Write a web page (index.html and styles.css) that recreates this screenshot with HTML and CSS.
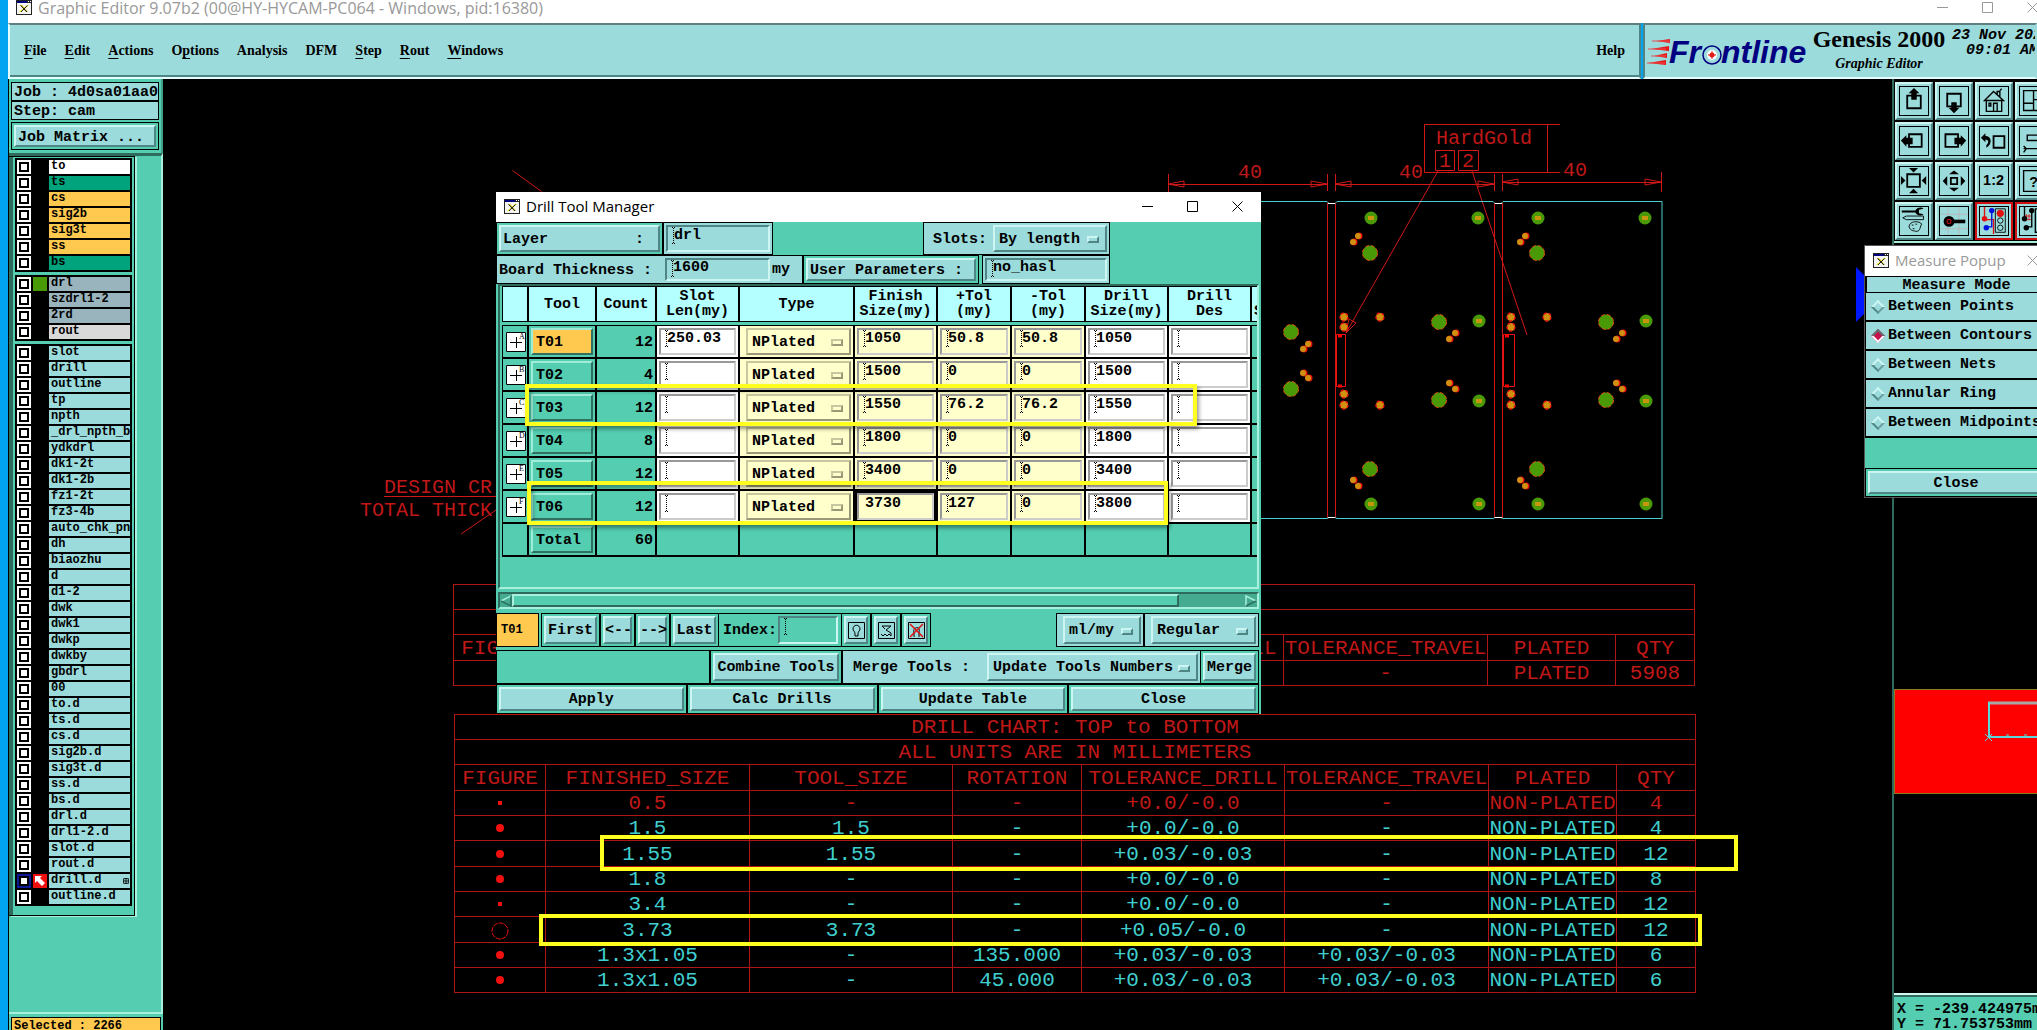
FILE: index.html
```html
<!DOCTYPE html>
<html lang="en">
<head>
<meta charset="utf-8">
<title>Graphic Editor</title>
<link rel="stylesheet" href="styles.css">
</head>
<body>
<svg class="defs" width="0" height="0" aria-hidden="true">
  <symbol id="xwin" viewBox="0 0 16 15"><path d="M0 0h16v15H0z" fill="#222"/><path d="M1 3h14v11H1z" fill="#f4f4f4"/><path d="M1 1h10v2H1z" fill="#000080"/><path d="M12 1h1v1h-1zM14 1h1v1h-1z" fill="#fff"/><path d="M3 12l8-7h2l-8 7z" fill="#e8e020"/><path d="M4 5h2l6 7h-2z" fill="#c8b400"/><path d="M4.500 5.500l6.500 6.500M11.500 5.500L5 12" stroke="#222"/></symbol>
  <symbol id="min" viewBox="0 0 11 11"><path d="M0 5.500h11" stroke="currentColor"/></symbol>
  <symbol id="max" viewBox="0 0 11 11"><path d="M.5.5h10v10H.5z" fill="none" stroke="currentColor"/></symbol>
  <symbol id="cls" viewBox="0 0 11 11"><path d="M.5.5l10 10M10.500.5l-10 10" stroke="currentColor"/></symbol>
</svg>

<div class="app">
  <header class="titlebar dim">
    <svg class="xicon"><use href="#xwin"/></svg>
    <h1>Graphic Editor 9.07b2 (00@HY-HYCAM-PC064 - Windows, pid:16380)</h1>
    <div class="winbtns">
      <button aria-label="Minimize"><svg><use href="#min"/></svg></button>
      <button aria-label="Maximize"><svg><use href="#max"/></svg></button>
      <button aria-label="Close window"><svg><use href="#cls"/></svg></button>
    </div>
  </header>

  <div class="top">
    <nav class="menubar">
      <a href="#file"><u>F</u>ile</a><a href="#edit"><u>E</u>dit</a><a href="#actions"><u>A</u>ctions</a><a href="#options">O<u>p</u>tions</a><a href="#analysis">Analysis</a><a href="#dfm">DFM</a><a href="#step"><u>S</u>tep</a><a href="#rout"><u>R</u>out</a><a href="#windows"><u>W</u>indows</a><a class="help" href="#help">Help</a>
    </nav>
    <div class="brand">
      <svg class="logo" viewBox="0 0 162 34" role="img" aria-label="Frontline">
        <path d="M8 6l14-2v4zM3 14l18-3v5zM6 21l13-3v5zM0 28l18-3v5z" fill="#e81818"/>
        <path d="M4 6h18M0 14h18M3 21h15M-1 28h18" stroke="#e85050"/>
        <text x="21" y="28">Fr</text><text x="73" y="28">ntline</text>
        <circle cx="64" cy="20" r="9" fill="#9bdbdb" stroke="#000080" stroke-width="1.500"/>
        <circle cx="64" cy="20" r="5" fill="#fff"/><circle cx="64" cy="20" r="2.500" fill="#e81818"/><path d="M60 20h8M64 16v8" stroke="#e81818"/>
      </svg>
      <div class="product"><strong>Genesis 2000</strong><em>Graphic Editor</em></div>
      <div class="clock"><span>23 Nov 2022</span><span>09:01 AM</span></div>
    </div>
  </div>

  <div class="body">
    <aside class="side">
      <div class="jobbox">
        <div class="line">Job : 4d0sa01aa0</div>
        <div class="line">Step: cam</div>
        <div class="cell"><button class="bv left">Job Matrix ...</button></div>
      </div>
      <div class="layers">
        <div class="frame">
          <div class="group">
            <label class="ly white"><input type="checkbox"><i></i><span>to</span></label>
            <label class="ly green"><input type="checkbox"><i></i><span>ts</span></label>
            <label class="ly amber"><input type="checkbox"><i></i><span>cs</span></label>
            <label class="ly amber"><input type="checkbox"><i></i><span>sig2b</span></label>
            <label class="ly amber"><input type="checkbox"><i></i><span>sig3t</span></label>
            <label class="ly amber"><input type="checkbox"><i></i><span>ss</span></label>
            <label class="ly green"><input type="checkbox"><i></i><span>bs</span></label>
          </div>
          <div class="group">
            <label class="ly slate shown"><input type="checkbox"><i></i><span>drl</span></label>
            <label class="ly slate"><input type="checkbox"><i></i><span>szdrl1-2</span></label>
            <label class="ly slate"><input type="checkbox"><i></i><span>2rd</span></label>
            <label class="ly grey"><input type="checkbox"><i></i><span>rout</span></label>
          </div>
          <div class="group">
            <label class="ly"><input type="checkbox"><i></i><span>slot</span></label>
            <label class="ly"><input type="checkbox"><i></i><span>drill</span></label>
            <label class="ly"><input type="checkbox"><i></i><span>outline</span></label>
            <label class="ly"><input type="checkbox"><i></i><span>tp</span></label>
            <label class="ly"><input type="checkbox"><i></i><span>npth</span></label>
            <label class="ly"><input type="checkbox"><i></i><span>_drl_npth_ba</span></label>
            <label class="ly"><input type="checkbox"><i></i><span>ydkdrl</span></label>
            <label class="ly"><input type="checkbox"><i></i><span>dk1-2t</span></label>
            <label class="ly"><input type="checkbox"><i></i><span>dk1-2b</span></label>
            <label class="ly"><input type="checkbox"><i></i><span>fz1-2t</span></label>
            <label class="ly"><input type="checkbox"><i></i><span>fz3-4b</span></label>
            <label class="ly"><input type="checkbox"><i></i><span>auto_chk_pnl</span></label>
            <label class="ly"><input type="checkbox"><i></i><span>dh</span></label>
            <label class="ly"><input type="checkbox"><i></i><span>biaozhu</span></label>
            <label class="ly"><input type="checkbox"><i></i><span>d</span></label>
            <label class="ly"><input type="checkbox"><i></i><span>d1-2</span></label>
            <label class="ly"><input type="checkbox"><i></i><span>dwk</span></label>
            <label class="ly"><input type="checkbox"><i></i><span>dwk1</span></label>
            <label class="ly"><input type="checkbox"><i></i><span>dwkp</span></label>
            <label class="ly"><input type="checkbox"><i></i><span>dwkby</span></label>
            <label class="ly"><input type="checkbox"><i></i><span>gbdrl</span></label>
            <label class="ly"><input type="checkbox"><i></i><span>00</span></label>
            <label class="ly"><input type="checkbox"><i></i><span>to.d</span></label>
            <label class="ly"><input type="checkbox"><i></i><span>ts.d</span></label>
            <label class="ly"><input type="checkbox"><i></i><span>cs.d</span></label>
            <label class="ly"><input type="checkbox"><i></i><span>sig2b.d</span></label>
            <label class="ly"><input type="checkbox"><i></i><span>sig3t.d</span></label>
            <label class="ly"><input type="checkbox"><i></i><span>ss.d</span></label>
            <label class="ly"><input type="checkbox"><i></i><span>bs.d</span></label>
            <label class="ly"><input type="checkbox"><i></i><span>drl.d</span></label>
            <label class="ly"><input type="checkbox"><i></i><span>drl1-2.d</span></label>
            <label class="ly"><input type="checkbox"><i></i><span>slot.d</span></label>
            <label class="ly"><input type="checkbox"><i></i><span>rout.d</span></label>
            <label class="ly work"><input type="checkbox" checked><i><svg viewBox="0 0 14 14"><path d="M2 2h7L7 4l5 5-3 3-5-5-2 2z" fill="#fff"/></svg></i><span>drill.d<svg class="mark" viewBox="0 0 5 5"><path d="M.5.5h4v4h-4zM2.500 0v5M0 2.500h5" fill="none" stroke="#000" stroke-width=".7"/></svg></span></label>
            <label class="ly"><input type="checkbox"><i></i><span>outline.d</span></label>
          </div>
        </div>
      </div>
      <div class="selected"><span>Selected : 2266</span></div>
    </aside>

    <main class="canvas">
      <svg class="drawing" viewBox="163 79 1729 951" width="1729" height="951">
        <defs>
          <g id="pad"><circle r="6.500" fill="#4a9a08"/><path d="M-3-2h6v4h-6z" fill="#c8960c"/></g>
          <g id="big"><circle r="7.500" fill="#4a9a08" stroke="#e05010" stroke-dasharray="4 2"/></g>
          <g id="dot"><circle r="3.500" cx="1" fill="#e81010"/><circle r="3" fill="#d09010"/></g>
          <g id="via"><circle r="4" fill="#d09010" stroke="#e81010" stroke-width="1.500" stroke-dasharray="3 2"/></g>
          <g id="board">
            <use href="#pad" x="1371" y="218"/><use href="#pad" x="1478" y="218"/><use href="#pad" x="1479" y="321"/><use href="#pad" x="1479" y="401"/><use href="#pad" x="1371" y="504"/><use href="#pad" x="1479" y="504"/>
            <use href="#big" x="1370" y="253"/><use href="#big" x="1439" y="322"/><use href="#big" x="1439" y="400"/><use href="#big" x="1370" y="469"/>
            <use href="#dot" x="1353" y="242"/><use href="#dot" x="1358" y="236"/><use href="#dot" x="1449" y="339"/><use href="#dot" x="1455" y="333"/><use href="#dot" x="1449" y="383"/><use href="#dot" x="1455" y="389"/><use href="#dot" x="1353" y="480"/><use href="#dot" x="1358" y="486"/>
            <use href="#via" x="1344" y="317"/><use href="#via" x="1344" y="327"/><use href="#via" x="1380" y="317"/><use href="#via" x="1344" y="394"/><use href="#via" x="1344" y="405"/><use href="#via" x="1380" y="405"/>
          </g>
        </defs>
        <g fill="none" stroke="#d01818">
          <path d="M512.500 170.500l29 21M461 534l38-26M384 496.500h112"/>
          <path d="M1327.500 174v17M1335.500 174v17M1494.500 174v17M1502.500 174v17M1168.500 174v18M1661.500 172v20M1168 184.500h159M1335 184.500h160M1502 182.500h160"/>
          <path d="M1168 184l16-3v6zM1327 184l-16-3v6zM1335 184l16-3v6zM1494 184l-16-3v6zM1502 182l16-3v6zM1661 182l-16-3v6z"/>
          <path d="M1327.500 203v315M1335.500 203v315M1494.500 203v315M1502.500 203v315"/>
          <path d="M1560 124.500h-135.500v48H1560M1547.500 124.500v48M1435.500 150.500h19v20h-19zM1458.500 150.500h20v20h-20z"/>
          <path d="M1438 171l-92 162M1346 333l3-14 7 4zM1472 171l55 164"/>
          <path d="M1336.500 334.500h9v52h-9zM1503.500 334.500h11v52h-11z" stroke="#f01010"/>
          <path d="M1338 336h4M1338 386h4M1505 336h4M1505 386h4" stroke="#f00" stroke-width="3"/>
        </g>
        <path d="M1240 201.500h87l2 2h6l2-2h156l2 2h6l2-2h159v317h-159l-2-1h-6l-2 1h-156l-2-1h-6l-2 1h-87" fill="none" stroke="#48d0d0"/>
        <path d="M1328 203.500h7M1495 203.500h7M1328 517.500h7M1495 517.500h7" stroke="#fff"/>
        <use href="#board"/><use href="#board" x="167"/>
        <use href="#big" x="1291" y="332"/><use href="#big" x="1291" y="389"/>
        <use href="#dot" x="1303" y="349"/><use href="#dot" x="1308" y="344"/><use href="#dot" x="1303" y="373"/><use href="#dot" x="1308" y="378"/>
        <g class="vec">
          <text x="1238" y="178">40</text><text x="1399" y="178">40</text><text x="1563" y="176">40</text>
          <text x="1436" y="144">HardGold</text><text x="1439" y="167">1</text><text x="1462" y="167">2</text>
          <text x="384" y="493">DESIGN CR</text><text x="360" y="516">TOTAL THICK</text>
        </g>
        <path d="M1856 267l8 8h10v39h-10l-8 8z" fill="#0018ff"/>
      </svg>

      <table class="chart upper">
        <colgroup><col class="c1"><col class="c2"><col class="c3"><col class="c4"><col class="c5"><col class="c6"><col class="c7"><col class="c8"></colgroup>
        <tr><th colspan="8"></th></tr>
        <tr><th colspan="8"></th></tr>
        <tr><th>FIGURE</th><th></th><th></th><th></th><th>TOLERANCE_DRILL</th><th>TOLERANCE_TRAVEL</th><th>PLATED</th><th>QTY</th></tr>
        <tr class="red"><td></td><td></td><td></td><td></td><td></td><td>-</td><td>PLATED</td><td>5908</td></tr>
      </table>

      <table class="chart lower">
        <colgroup><col class="c1"><col class="c2"><col class="c3"><col class="c4"><col class="c5"><col class="c6"><col class="c7"><col class="c8"></colgroup>
        <tr><th colspan="8">DRILL CHART: TOP to BOTTOM</th></tr>
        <tr><th colspan="8">ALL UNITS ARE IN MILLIMETERS</th></tr>
        <tr><th>FIGURE</th><th>FINISHED_SIZE</th><th>TOOL_SIZE</th><th>ROTATION</th><th>TOLERANCE_DRILL</th><th>TOLERANCE_TRAVEL</th><th>PLATED</th><th>QTY</th></tr>
        <tr class="red"><td><i class="fig s"></i></td><td>0.5</td><td>-</td><td>-</td><td>+0.0/-0.0</td><td>-</td><td>NON-PLATED</td><td>4</td></tr>
        <tr><td><i class="fig"></i></td><td>1.5</td><td>1.5</td><td>-</td><td>+0.0/-0.0</td><td>-</td><td>NON-PLATED</td><td>4</td></tr>
        <tr><td><i class="fig"></i></td><td>1.55</td><td>1.55</td><td>-</td><td>+0.03/-0.03</td><td>-</td><td>NON-PLATED</td><td>12</td></tr>
        <tr><td><i class="fig"></i></td><td>1.8</td><td>-</td><td>-</td><td>+0.0/-0.0</td><td>-</td><td>NON-PLATED</td><td>8</td></tr>
        <tr><td><i class="fig s"></i></td><td>3.4</td><td>-</td><td>-</td><td>+0.0/-0.0</td><td>-</td><td>NON-PLATED</td><td>12</td></tr>
        <tr><td><svg class="ring" viewBox="0 0 18 18"><circle cx="9" cy="9" r="8" fill="none" stroke="#f01010" stroke-dasharray="5 1"/></svg></td><td>3.73</td><td>3.73</td><td>-</td><td>+0.05/-0.0</td><td>-</td><td>NON-PLATED</td><td>12</td></tr>
        <tr><td><i class="fig"></i></td><td>1.3x1.05</td><td>-</td><td>135.000</td><td>+0.03/-0.03</td><td>+0.03/-0.03</td><td>NON-PLATED</td><td>6</td></tr>
        <tr><td><i class="fig"></i></td><td>1.3x1.05</td><td>-</td><td>45.000</td><td>+0.03/-0.03</td><td>+0.03/-0.03</td><td>NON-PLATED</td><td>6</td></tr>
      </table>
      <div class="hl hl3"></div>
      <div class="hl hl4"></div>
    </main>

    <aside class="right">
      <div class="tools">
        <button aria-label="Pan up"><svg viewBox="0 0 31 31"><path d="M8 9.500h15v14H8z" fill="none" stroke="#000" stroke-width="2"/><path d="M15.500 1l6 6h-3v7h-6V7h-3z"/></svg></button>
        <button aria-label="Pan down"><svg viewBox="0 0 31 31"><path d="M8 7.500h15v14H8z" fill="none" stroke="#000" stroke-width="2"/><path d="M15.500 29l6-6h-3v-6h-6v6h-3z"/></svg></button>
        <button aria-label="Home"><svg viewBox="0 0 31 31"><path d="M7 15v12h17V15M5 15L15 5l11 10zM19 8V5h3v6M22 4l2-2M15 27v-9h4v9M10 18h2v3h-2z" fill="none" stroke="#000" stroke-width="1.500"/></svg></button>
        <button aria-label="Zoom area"><svg viewBox="0 0 31 31"><path d="M4 4h24v22H4zM15 4v22M4 18h11M15 14h13" fill="none" stroke="#000" stroke-width="1.500"/></svg></button>
        <button aria-label="Pan left"><svg viewBox="0 0 31 31"><path d="M10 8h14v14H10z" fill="none" stroke="#000" stroke-width="2"/><path d="M1 15l6-6v3h7v7H7v3z"/></svg></button>
        <button aria-label="Pan right"><svg viewBox="0 0 31 31"><path d="M6 8h14v14H6z" fill="none" stroke="#000" stroke-width="2"/><path d="M29 15l-6-6v3h-7v7h7v3z"/></svg></button>
        <button aria-label="Previous view"><svg viewBox="0 0 31 31"><path d="M15 10h12v13H15z" fill="none" stroke="#000" stroke-width="2"/><path d="M1 12l5-5v3c7 0 8 9 1 13v-3c3-3 3-6-1-6v3z"/></svg></button>
        <button aria-label="Serial view"><svg viewBox="0 0 31 31"><path d="M8 9h20v6H8zM4 24h24M4 21l3 3-3 4" fill="none" stroke="#000" stroke-width="1.500"/></svg></button>
        <button aria-label="Zoom out"><svg viewBox="0 0 31 31"><path d="M8 8h14v14H8z" fill="none" stroke="#000" stroke-width="2"/><path d="M10 1h10l-5 5zM10 29h10l-5-5zM1 10v10l5-5zM29 10v10l-5-5z"/></svg></button>
        <button aria-label="Zoom in"><svg viewBox="0 0 31 31"><path d="M12 12h7v7h-7z" fill="none" stroke="#000" stroke-width="2"/><path d="M10 8h11l-5.500-4zM10 23h11l-5.500 4zM8 10v11l-5-5.500zM23 10v11l5-5.500z"/></svg></button>
        <button aria-label="One to two"><svg viewBox="0 0 31 31"><text x="15" y="20" text-anchor="middle">1:2</text></svg></button>
        <button aria-label="Query"><svg viewBox="0 0 31 31"><path d="M4 4h24v23H4z" fill="none" stroke="#000" stroke-width="1.500"/><text x="15" y="22" text-anchor="middle">?</text></svg></button>
        <button aria-label="Setup"><svg viewBox="0 0 31 31"><path d="M2 4h15c2-4 7-4 9-2l-5 1v4l5 1c-2 2-7 2-9-2H2z"/><path d="M3 12l4-2h19v4H7zM10 22c0-7 12-7 14-3-2 2-1 8-6 8-3-1-6 0-8-5zM13 20h2M17 19h2M14 24h2" fill="none" stroke="#000"/></svg></button>
        <button aria-label="Feature select"><svg viewBox="0 0 31 31"><path d="M9 0v31M21 0v31M0 8h31M0 24h31" stroke="#b8b8b8"/><circle cx="10" cy="16" r="6"/><path d="M15 14h13v4H15z"/><path d="M8 14h4v4H8z" fill="none" stroke="#e01010"/></svg></button>
        <button class="on" aria-label="Net display"><svg viewBox="0 0 31 31"><path d="M5 0v14h10v16" fill="none" stroke="#e01010" stroke-width="1.500"/><path d="M13 3v19H7" fill="none" stroke="#0010e0" stroke-width="1.500"/><circle cx="5" cy="13" r="3" fill="#e01010"/><circle cx="13" cy="4" r="3" fill="#0010e0"/><circle cx="7" cy="23" r="3" fill="#0010e0"/><path d="M17 2h11v26H17z" fill="none" stroke="#000"/><circle cx="22.500" cy="7" r="4" fill="#e01010"/><circle cx="22.500" cy="15" r="3" fill="none" stroke="#000"/><circle cx="22.500" cy="23" r="3" fill="none" stroke="#000"/></svg></button>
        <button class="on" aria-label="Short display"><svg viewBox="0 0 31 31"><path d="M5 0v14M13 3v19H7M17 2h11v26H17z" fill="none" stroke="#000" stroke-width="1.500"/><path d="M6 10h6M6 14h6M7 8v6M10 8v6" stroke="#e01010"/><circle cx="5" cy="13" r="3"/><circle cx="13" cy="4" r="3"/><circle cx="7" cy="23" r="3"/></svg></button>
      </div>
      <div class="overview"><svg viewBox="0 0 143 105" width="143" height="105"><path d="M0 .5h143M.5 0v105M0 104.500h143" stroke="#8a7a20"/><path d="M94 14h60" stroke="#a8a8a8" stroke-width="3"/><path d="M95 13v35h59" fill="none" stroke="#58d8d8" stroke-width="2"/><path d="M91 45l7 7M98 45l-7 7M112 46h3M130 46h3" stroke="#58d8d8"/></svg></div>
      <div class="coords"><span>X = -239.424975mm</span><span>Y = 71.753753mm</span></div>
    </aside>
  </div>
</div>

<section class="window measure">
  <header class="titlebar dim">
    <svg class="xicon"><use href="#xwin"/></svg><h2>Measure Popup</h2>
    <div class="winbtns"><button aria-label="Close popup"><svg><use href="#cls"/></svg></button></div>
  </header>
  <fieldset class="modes">
    <legend>Measure Mode</legend>
    <label><input type="radio" name="mode"> Between Points</label>
    <label><input type="radio" name="mode" checked> Between Contours</label>
    <label><input type="radio" name="mode"> Between Nets</label>
    <label><input type="radio" name="mode"> Annular Ring</label>
    <label><input type="radio" name="mode"> Between Midpoints</label>
  </fieldset>
  <div class="cell"><button class="bv">Close</button></div>
</section>

<section class="window dialog">
  <header class="titlebar">
    <svg class="xicon"><use href="#xwin"/></svg><h2>Drill Tool Manager</h2>
    <div class="winbtns">
      <button aria-label="Minimize dialog"><svg><use href="#min"/></svg></button>
      <button aria-label="Maximize dialog"><svg><use href="#max"/></svg></button>
      <button aria-label="Close dialog"><svg><use href="#cls"/></svg></button>
    </div>
  </header>

  <div class="row r1">
    <div class="cell w-layer"><button class="bv split"><span>Layer</span><span>:</span></button></div>
    <div class="cell cy w-drl"><input class="in" aria-label="Layer name" value="drl"></div>
    <div class="cell cy w-slots"><label for="slots">Slots:</label><span class="opt"><select id="slots"><option>By length</option></select></span></div>
  </div>
  <div class="row r2">
    <div class="cell cy w-board"><label for="thick">Board Thickness :</label><input class="in" id="thick" value="1600"><span>my</span></div>
    <div class="cell w-user"><button class="bv left">User Parameters :</button></div>
    <div class="cell cy w-hasl"><input class="in" aria-label="User parameters" value="no_hasl"></div>
  </div>

  <div class="sheet">
    <table class="drills">
      <colgroup><col class="d0"><col class="d1"><col class="d2"><col class="d3"><col class="d4"><col class="d3"><col class="d5"><col class="d5"><col class="d3"><col class="d3"><col class="d3"></colgroup>
      <thead><tr><th></th><th>Tool</th><th>Count</th><th>Slot<br>Len(my)</th><th>Type</th><th>Finish<br>Size(my)</th><th>+Tol<br>(my)</th><th>-Tol<br>(my)</th><th>Drill<br>Size(my)</th><th>Drill<br>Des</th><th class="last"><br>Shape</th></tr></thead>
      <tbody>
      <tr><td><svg class="plus" viewBox="0 0 20 20"><path d="M.5.5h19v19H.5z"/><path d="M4 10.500h12M10.500 5v11"/><text x="13" y="7">A</text></svg></td><td><button class="bv t on">T01</button></td><td class="n">12</td><td class="w"><input class="in" aria-label="T01 slot" value="250.03"></td><td class="y"><span class="opt"><select aria-label="T01 type"><option>NPlated</option></select></span></td><td class="y"><input class="in" aria-label="T01 finish" value="1050"></td><td class="y"><input class="in" aria-label="T01 plus" value="50.8"></td><td class="y"><input class="in" aria-label="T01 minus" value="50.8"></td><td class="w"><input class="in" aria-label="T01 drill" value="1050"></td><td class="w"><input class="in" aria-label="T01 des"></td><td></td></tr>
      <tr><td><svg class="plus" viewBox="0 0 20 20"><path d="M.5.5h19v19H.5z"/><path d="M4 10.500h12M10.500 5v11"/><text x="13" y="7">B</text></svg></td><td><button class="bv t">T02</button></td><td class="n">4</td><td class="w"><input class="in" aria-label="T02 slot"></td><td class="y"><span class="opt"><select aria-label="T02 type"><option>NPlated</option></select></span></td><td class="y"><input class="in" aria-label="T02 finish" value="1500"></td><td class="y"><input class="in" aria-label="T02 plus" value="0"></td><td class="y"><input class="in" aria-label="T02 minus" value="0"></td><td class="w"><input class="in" aria-label="T02 drill" value="1500"></td><td class="w"><input class="in" aria-label="T02 des"></td><td></td></tr>
      <tr><td><svg class="plus" viewBox="0 0 20 20"><path d="M.5.5h19v19H.5z"/><path d="M4 10.500h12M10.500 5v11"/><text x="13" y="7">C</text></svg></td><td><button class="bv t">T03</button></td><td class="n">12</td><td class="w"><input class="in" aria-label="T03 slot"></td><td class="y"><span class="opt"><select aria-label="T03 type"><option>NPlated</option></select></span></td><td class="y"><input class="in" aria-label="T03 finish" value="1550"></td><td class="y"><input class="in" aria-label="T03 plus" value="76.2"></td><td class="y"><input class="in" aria-label="T03 minus" value="76.2"></td><td class="w"><input class="in" aria-label="T03 drill" value="1550"></td><td class="w"><input class="in" aria-label="T03 des"></td><td></td></tr>
      <tr><td><svg class="plus" viewBox="0 0 20 20"><path d="M.5.5h19v19H.5z"/><path d="M4 10.500h12M10.500 5v11"/><text x="13" y="7">D</text></svg></td><td><button class="bv t">T04</button></td><td class="n">8</td><td class="w"><input class="in" aria-label="T04 slot"></td><td class="y"><span class="opt"><select aria-label="T04 type"><option>NPlated</option></select></span></td><td class="y"><input class="in" aria-label="T04 finish" value="1800"></td><td class="y"><input class="in" aria-label="T04 plus" value="0"></td><td class="y"><input class="in" aria-label="T04 minus" value="0"></td><td class="w"><input class="in" aria-label="T04 drill" value="1800"></td><td class="w"><input class="in" aria-label="T04 des"></td><td></td></tr>
      <tr><td><svg class="plus" viewBox="0 0 20 20"><path d="M.5.5h19v19H.5z"/><path d="M4 10.500h12M10.500 5v11"/><text x="13" y="7">E</text></svg></td><td><button class="bv t">T05</button></td><td class="n">12</td><td class="w"><input class="in" aria-label="T05 slot"></td><td class="y"><span class="opt"><select aria-label="T05 type"><option>NPlated</option></select></span></td><td class="y"><input class="in" aria-label="T05 finish" value="3400"></td><td class="y"><input class="in" aria-label="T05 plus" value="0"></td><td class="y"><input class="in" aria-label="T05 minus" value="0"></td><td class="w"><input class="in" aria-label="T05 drill" value="3400"></td><td class="w"><input class="in" aria-label="T05 des"></td><td></td></tr>
      <tr><td><svg class="plus" viewBox="0 0 20 20"><path d="M.5.5h19v19H.5z"/><path d="M4 10.500h12M10.500 5v11"/><text x="13" y="7">F</text></svg></td><td><button class="bv t">T06</button></td><td class="n">12</td><td class="w"><input class="in" aria-label="T06 slot"></td><td class="y"><span class="opt"><select aria-label="T06 type"><option>NPlated</option></select></span></td><td class="y"><input class="in focus" aria-label="T06 finish" value="3730"></td><td class="y"><input class="in" aria-label="T06 plus" value="127"></td><td class="y"><input class="in" aria-label="T06 minus" value="0"></td><td class="w"><input class="in" aria-label="T06 drill" value="3800"></td><td class="w"><input class="in" aria-label="T06 des"></td><td></td></tr>
      <tr><td></td><td><button class="bv t">Total</button></td><td class="n">60</td><td></td><td></td><td></td><td></td><td></td><td></td><td></td><td></td></tr>
      </tbody>
    </table>
  </div>
  <div class="scroll">
    <svg viewBox="0 0 12 12"><path d="M11 1v10L1 6z" fill="#44ab91"/><path d="M11 1L1 6" stroke="#a8f0dc" stroke-width="1.500"/><path d="M1 6l10 5V1" fill="none" stroke="#2a7060" stroke-width="1.500"/></svg>
    <div class="trough"><div class="thumb"></div></div>
    <svg viewBox="0 0 12 12"><path d="M1 1v10l10-5z" fill="#44ab91"/><path d="M1 11V1l10 5" fill="none" stroke="#a8f0dc" stroke-width="1.500"/><path d="M1 11l10-5" stroke="#2a7060" stroke-width="1.500"/></svg>
  </div>

  <div class="row r3">
    <div class="cell cur">T01</div>
    <div class="cell w58"><button class="bv">First</button></div>
    <div class="cell w35"><button class="bv">&lt;--</button></div>
    <div class="cell w35"><button class="bv">--&gt;</button></div>
    <div class="cell w49"><button class="bv">Last</button></div>
    <div class="index"><label for="idx">Index:</label><input class="in" id="idx"></div>
    <div class="cell w30"><button class="bv" aria-label="Highlight"><svg viewBox="0 0 17 17"><path d="M.5.5h16v16H.5z"/><path d="M7 12c0-3-2-3-2-5 0-5 7-5 7 0 0 2-2 2-2 5v2H7z"/></svg></button></div>
    <div class="cell w30"><button class="bv" aria-label="Select"><svg viewBox="0 0 17 17"><path d="M.5.5h16v16H.5z"/><path d="M4 4h9l-5 4 5 3v3l-2-2-2 2-2-2-2 2-2-2M4 4l3 3"/></svg></button></div>
    <div class="cell w30"><button class="bv" aria-label="Clear"><svg viewBox="0 0 17 17"><path d="M.5.5h16v16H.5z"/><path d="M6 15v-4c-2-6 7-8 5-1v5"/><path d="M2 2l13 13M15 2L2 15" stroke="#e01010" stroke-width="1.500"/></svg></button></div>
    <div class="cell cy w-unit"><span class="opt"><select aria-label="Units"><option>ml/my</option></select></span></div>
    <div class="cell cy w-reg"><span class="opt"><select aria-label="Display"><option>Regular</option></select></span></div>
  </div>
  <div class="row r4">
    <div class="cell w-blank"></div>
    <div class="cell w-comb"><button class="bv">Combine Tools</button></div>
    <div class="cell cy w-merge"><label for="merge">Merge Tools :</label><span class="opt"><select id="merge"><option>Update Tools Numbers</option></select></span></div>
    <div class="cell w-mbtn"><button class="bv">Merge</button></div>
  </div>
  <div class="row r5">
    <div class="cell"><button class="bv">Apply</button></div>
    <div class="cell"><button class="bv">Calc Drills</button></div>
    <div class="cell"><button class="bv">Update Table</button></div>
    <div class="cell"><button class="bv">Close</button></div>
  </div>
  <div class="hl hl1"></div>
  <div class="hl hl2"></div>
</section>
</body>
</html>
```
FILE: styles.css
```css
*, *::before, *::after { box-sizing: border-box; }
:root {
  --teal: #54cdb0;
  --cyan: #9bdbdb;
  --lite: #cdf6f3;
  --dark: #4f8585;
  --red: #c01818;
  --aqua: #40cfcf;
}
body {
  margin: 0;
  height: 100vh;
  overflow: hidden;
  background: #00a4f0;
  font: bold 15px/18px "Liberation Mono", monospace;
  color: #000;
}
button, input, select { font: inherit; color: inherit; margin: 0; padding: 0; border-radius: 0; }
.defs { position: absolute; }
.app { display: flex; flex-direction: column; height: 100vh; margin-left: 8px; overflow: hidden; }

/* window title bars */
.titlebar { display: flex; align-items: center; gap: 6px; height: 30px; flex: none; padding: 0 0 2px 8px; background: #fff; }
.titlebar h1, .titlebar h2 { margin: 0; font: 15px/20px "Open Sans", sans-serif; white-space: nowrap; }
.titlebar.dim { color: #999; }
.app > .titlebar { height: 23px; padding-bottom: 8px; }
.app > .titlebar h1 { font-size: 16px; }
.xicon { width: 16px; height: 15px; flex: none; }
.winbtns { display: flex; gap: 34px; margin-left: auto; padding-right: 18px; }
.app .winbtns { margin-right: -19px; }
.winbtns button { border: 0; background: none; width: 11px; height: 11px; line-height: 0; }
.winbtns svg { width: 11px; height: 11px; }

/* menu and brand */
.top { display: flex; height: 56px; flex: none; }
.menubar { flex: 1; display: flex; align-items: center; gap: 18px; padding: 0 14px; background: var(--cyan); border: 2px solid; border-color: #5f7f80 #4f8585 #e4ffff #e4ffff; box-shadow: inset 0 -2px #4f8585; font: bold 14px/18px "Liberation Serif", serif; }
.menubar a { color: #000; text-decoration: none; }
.menubar u { text-underline-offset: 3px; }
.menubar .help { margin-left: auto; }
.brand { display: flex; width: 394px; margin-left: 2px; padding: 0 0 0 3px; background: var(--cyan); border: 2px solid; border-color: #5f7f80 transparent #e4ffff #4f8585; overflow: hidden; }
.logo { width: 162px; height: 34px; margin-top: 10px; flex: none; overflow: visible; }
.logo text { font: italic bold 32px "Liberation Sans", sans-serif; fill: #000080; }
.product { display: flex; flex-direction: column; align-items: center; flex: none; width: 138px; }
.product strong { font: bold 24px/28px "Liberation Serif", serif; }
.product em { font: italic bold 14px/22px "Liberation Serif", serif; }
.clock { display: flex; flex-direction: column; flex: none; padding: 3px 0 0 4px; font-style: italic; line-height: 15px; white-space: pre; }
.clock span + span { padding-left: 14px; }

.body { flex: 1; display: flex; min-height: 0; }

/* layer list */
.side { width: 155px; flex: none; display: flex; flex-direction: column; background: var(--teal); border-left: 1px solid #000; overflow: hidden; }
.jobbox { padding: 3px 2px; border-right: 2px solid #40a088; }
.line { height: 19px; padding: 1px 0 0 2px; border: 1px solid #000; background: var(--cyan); white-space: nowrap; }
.jobbox .cell { height: 28px; margin-top: 2px; }
.layers { flex: 1; background: var(--teal); border-right: 2px solid #a8f0dc; border-top: 3px solid #2f6b5c; border-bottom: 2px solid #a8f0dc; padding-right: 26px; }
.frame { display: flex; flex-direction: column; gap: 3px; padding: 1px 2px 9px 6px; border: 1px solid #000; border-left: 0; box-shadow: inset 4px 0 #2f6b5c, 2px 1px #a8f0dc; }
.group { background: #000; padding: 2px 2px 0; }
.ly { display: grid; grid-template-columns: 14px 14px 1fr; gap: 2px; height: 16px; --c: var(--cyan); }
.ly input { appearance: none; width: 14px; height: 14px; border: 2px solid #fff; background: #fff; box-shadow: inset 0 0 0 2px #000; }
.ly i, .ly i svg { display: block; width: 14px; height: 14px; }
.ly span { height: 14px; padding-left: 2px; overflow: hidden; background: var(--c); font-size: 12px; line-height: 13px; white-space: nowrap; }
.white { --c: #fff; } .green { --c: #00a37b; } .amber { --c: #ffc84f; } .slate { --c: #9ab4be; } .grey { --c: #d9d9d9; }
.shown i { background: #4a9a08; }
.work input { border-color: #0c1896; }
.work i { background: #f01010; }
.mark { float: right; width: 6px; height: 6px; margin: 4px 1px; }
.selected { flex: none; height: 16px; padding: 3px 2px 0; }
.selected span { display: block; padding-left: 2px; border: 1px solid #000; background: #ffc84f; font-size: 12px; line-height: 16px; }

/* canvas */
.canvas { position: relative; flex: 1; background: #000; overflow: hidden; }
.drawing { position: absolute; left: 0; top: 0; }
.vec text { font: 20px "Liberation Mono", monospace; fill: var(--red); }
.chart { position: absolute; width: 1241px; table-layout: fixed; border-collapse: collapse; font: 21px/20px "Liberation Mono", monospace; color: var(--aqua); }
.chart th, .chart td { height: 25px; padding: 2px 0 0; border: 1px solid #b01515; text-align: center; font-weight: normal; white-space: nowrap; overflow: hidden; }
.chart tr:nth-child(3n) > * { height: 26px; }
.chart th, .chart .red td { color: var(--red); }
.upper { left: 290px; top: 505px; }
.lower { left: 291px; top: 635px; }
.c1 { width: 91px; } .c2, .c6 { width: 204px; } .c3, .c5 { width: 203px; } .c4 { width: 129px; } .c7 { width: 128px; } .c8 { width: 79px; }
.fig { display: inline-block; width: 8px; height: 8px; border-radius: 4px; background: #f01010; vertical-align: middle; }
.fig.s { width: 4px; height: 4px; border-radius: 0; }
.ring { display: block; width: 18px; height: 18px; margin: auto; }
.hl { position: absolute; border: 4px solid #ffff20; pointer-events: none; }
.hl3 { left: 437px; top: 756px; width: 1138px; height: 36px; }
.hl4 { left: 376px; top: 835px; width: 1163px; height: 32px; }

/* right column */
.right { width: 145px; flex: none; display: flex; flex-direction: column; background: #000; border-left: 2px solid #2f6b5c; overflow: hidden; }
.tools { display: grid; grid-template-columns: repeat(4, 38px); gap: 2px; padding: 3px 0 1px 1px; border-bottom: 2px solid #a8f0dc; }
.tools button { height: 38px; padding: 2px; background: var(--cyan); border: 2px solid; border-color: var(--lite) var(--dark) var(--dark) var(--lite); line-height: 0; }
.tools svg { width: 30px; height: 30px; border: 1px solid #000; }
.tools text { font: bold 16px "Liberation Sans", sans-serif; }
.tools .on { border-color: #d01010; }
.overview { height: 105px; margin-top: 446px; background: #f00; }
.coords { display: flex; flex-direction: column; height: 37px; margin-top: auto; padding: 7px 0 0 3px; background: var(--teal); border-top: 2px solid #d0f8ee; box-shadow: inset 0 2px #2f6b5c; line-height: 15px; white-space: nowrap; }

/* motif widgets */
.cell { display: flex; align-items: stretch; padding: 2px; border: 1px solid #000; background: var(--teal); min-width: 0; }
.cell.cy { background: var(--cyan); }
.bv { flex: 1; min-width: 0; padding: 2px 2px 0; background: var(--cyan); border: 2px solid; border-color: var(--lite) var(--dark) var(--dark) var(--lite); white-space: nowrap; }
.bv.left { text-align: left; }
.bv svg { display: block; width: 17px; height: 17px; margin: auto; fill: none; stroke: #000; }
.split { display: flex; justify-content: space-between; align-items: center; padding-right: 14px; }
.in {
  width: 100%; min-width: 0; height: 100%; padding: 0 0 6px 6px;
  border: 2px solid; border-color: var(--dark) var(--lite) var(--lite) var(--dark);
  background:
    repeating-linear-gradient(#000 0 1px, transparent 1px 2px) 5px 1px / 1px 15px no-repeat,
    repeating-linear-gradient(90deg, #000 0 1px, transparent 1px 2px) 4px 0 / 3px 1px no-repeat,
    repeating-linear-gradient(90deg, #000 0 1px, transparent 1px 2px) 4px 16px / 3px 1px no-repeat;
  outline: 0;
}
.opt { display: flex; align-items: center; flex: 1; height: 100%; padding: 2px 6px 0 4px; border: 2px solid; border-color: var(--lite) var(--dark) var(--dark) var(--lite); }
.opt select { flex: 1; min-width: 0; appearance: none; border: 0; background: none; }
.opt::after { content: ""; flex: none; width: 12px; height: 7px; border: 2px solid; border-color: var(--lite) var(--dark) var(--dark) var(--lite); }
.row label { white-space: nowrap; padding-top: 2px; }

/* floating windows */
.window { position: absolute; background: var(--teal); }
.measure { left: 1864px; top: 245px; width: 184px; height: 253px; display: flex; flex-direction: column; border: 1px solid #555; }
.measure .winbtns { padding-right: 9px; }
.modes { margin: 0; padding: 0 0 0 1px; border: 0; min-width: 0; background: #000; }
.modes legend { float: left; width: 100%; height: 17px; padding: 1px 0 0; background: var(--cyan); border: 1px solid #000; text-align: center; line-height: 15px; }
.modes label { clear: both; display: flex; align-items: center; gap: 3px; height: 29px; padding: 1px 0 0 5px; background: var(--cyan); border-bottom: 2px solid #000; white-space: nowrap; }
.modes input { appearance: none; flex: none; width: 10px; height: 10px; margin: 0 2px; transform: rotate(45deg); border: 2px solid; border-color: var(--lite) #6a9d9d var(--dark) var(--lite); }
.modes input:checked { background: #c8104c; border-color: #607070 #fff #fff #607070; }
.measure > .cell { height: 29px; margin-top: auto; }

.dialog { left: 496px; top: 192px; width: 765px; }
.row { display: flex; }
.r1 { height: 33px; }
.r2 { height: 29px; }
.w-layer { width: 167px; }
.w-drl { width: 110px; }
.w-slots { width: 187px; margin-left: 150px; padding-left: 9px; align-items: center; gap: 6px; }
.w-board { width: 307px; align-items: center; }
.w-board .in { width: 105px; margin-left: 13px; margin-right: 2px; padding-bottom: 4px; }
.w-user { width: 176px; }
.w-hasl { width: 128px; margin-left: 3px; }
.w-hasl .in { padding-bottom: 4px; }
.sheet { height: 305px; margin: 0 2px; padding-left: 2px; overflow: hidden; border: 2px solid; border-color: #2f6b5c #a8f0dc #a8f0dc #2f6b5c; }
.drills { width: 833px; table-layout: fixed; border-spacing: 0; }
.d0 { width: 27px; } .d1 { width: 68px; } .d2 { width: 60px; } .d3 { width: 83px; } .d4 { width: 115px; } .d5 { width: 74px; }
.drills th { height: 36px; padding: 0; background: #b4ffff; border: 1px solid #000; border-width: 1px 2px 1px 0; line-height: 15px; font-weight: bold; }
.drills .last { text-align: left; padding-left: 2px; }
.drills tbody::before { content: ""; display: block; height: 3px; }
.drills td { height: 33px; padding: 2px; border: solid #000; border-width: 0 2px 2px 0; line-height: 18px; }
.drills tbody tr:first-child td { border-top: 1px solid #000; }
.drills td:first-child, .drills th:first-child { border-left: 1px solid #000; }
.drills .bv { display: block; width: 100%; height: 27px; }
.drills .t { background: none; text-align: left; padding-left: 3px; border-color: #a0ecd8 #2f7060 #2f7060 #a0ecd8; }
.drills .t.on { background: #ffc84f; }
.drills .n { text-align: right; padding-top: 4px; }
.drills .w { background: #fff; }
.drills .y { background: #ffffcc; }
.drills .in { display: block; height: 27px; border-color: #999 #ccc #ccc #999; }
.drills .opt { height: 27px; margin: 0 0 0 4px; border-color: #c8c8a0 #999978 #999978 #c8c8a0; }
.drills .opt::after { border-color: #c8c8a0 #999978 #999978 #c8c8a0; }
.drills .focus { background: none; box-shadow: 0 0 0 2px #000; }
.plus { display: block; width: 20px; height: 20px; margin: 1px 0 0 1px; background: #fff; fill: none; stroke: #000; }
.plus text { font: 8px "Liberation Serif", serif; fill: #000; stroke: none; }
.scroll { display: flex; align-items: center; height: 17px; margin: 3px 2px 4px; border: 2px solid; border-color: #2f6b5c #a8f0dc #a8f0dc #2f6b5c; background: #44ab91; }
.scroll svg { width: 12px; height: 12px; flex: none; }
.trough { flex: 1; height: 13px; }
.thumb { width: 91%; height: 13px; background: var(--teal); border: 2px solid; border-color: #a8f0dc #2f6b5c #2f6b5c #a8f0dc; }
.r3 { height: 34px; margin-bottom: 3px; }
.r3 .bv { padding: 2px 0 0; }
.cur { width: 43px; align-items: center; padding-left: 4px; margin-right: 2px; background: #ffc84f; font-size: 12px; }
.w58 { width: 59px; } .w35 { width: 35px; } .w49 { width: 49px; } .w30 { width: 30px; }
.r3 .w30 .bv { padding: 0; }
.index { display: flex; align-items: center; width: 122px; padding: 2px 3px 2px 4px; border: solid #000; border-width: 1px 0; }
.index .in { width: 60px; margin-left: auto; }
.w-unit { width: 88px; margin-left: auto; padding-left: 6px; }
.w-reg { width: 115px; padding-left: 6px; margin-right: 2px; }
.r4 { height: 34px; }
.w-blank { width: 214px; }
.w-comb { width: 132px; }
.w-merge { flex: 1; align-items: center; padding-left: 10px; gap: 17px; }
.w-mbtn { width: 58px; margin-right: 2px; border-left: 0; }
.w-mbtn .bv, .w-comb .bv { padding: 2px 0 0; }
.r5 { height: 30px; padding: 0 2px 0 0; }
.r5 .cell { flex: 1; }
.hl1, .hl2 { box-shadow: 2px 3px 4px #0006, inset 2px 3px 4px #0005; }
.hl1 { left: 29px; top: 192px; width: 672px; height: 42px; }
.hl2 { left: 31px; top: 289px; width: 641px; height: 44px; }
```
